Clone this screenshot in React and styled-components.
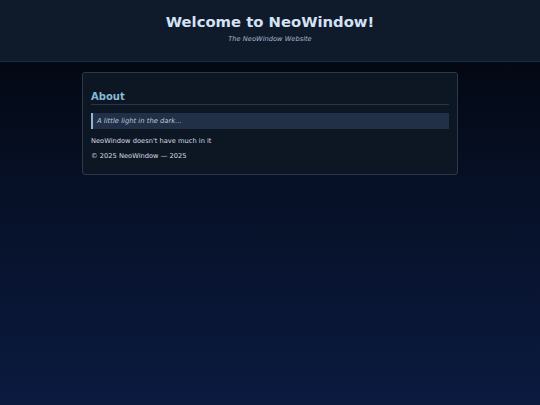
import React from "react";
import styled, { createGlobalStyle } from "styled-components";

const GlobalStyle = createGlobalStyle`
  html, body {
    margin: 0;
    padding: 0;
    min-height: 100%;
  }
  body {
    font-family: "DejaVu Sans", Verdana, sans-serif;
    background: linear-gradient(180deg, #020409 0%, #061026 45%, #0b1a3f 100%);
    min-height: 405px;
    color: #d6dde6;
  }
`;

const Page = styled.div`
  min-height: 405px;
  display: flex;
  flex-direction: column;
`;

const Header = styled.header`
  height: 62px;
  background: #0f1b2b;
  border-bottom: 1px solid #1b2a3d;
  display: flex;
  flex-direction: column;
  align-items: center;
  padding-top: 12px;
  box-sizing: border-box;
`;

const Title = styled.h1`
  margin: 0;
  font-size: 14.8px;
  font-weight: bold;
  color: #d3e2f5;
  line-height: 20px;
`;

const Subtitle = styled.p`
  margin: 3px 0 0;
  font-size: 6.7px;
  font-style: italic;
  color: #a9b8cc;
`;

const Card = styled.section`
  width: 376px;
  box-sizing: border-box;
  margin: 10px auto 0;
  background: #0d1623;
  border: 1px solid #2a394c;
  border-radius: 3px;
  padding: 18px 8px 14px;
`;

const Heading = styled.h2`
  margin: 0;
  font-size: 10px;
  font-weight: bold;
  color: #86bcd6;
  padding-bottom: 2px;
  border-bottom: 1px solid #25364a;
`;

const Quote = styled.blockquote`
  margin: 8px 0 0;
  padding: 4px 4px;
  background: #213047;
  border-left: 2px solid #8fb6d2;
  font-size: 6.8px;
  font-style: italic;
  color: #b9c7d8;
`;

const Text = styled.p`
  margin: ${(p) => p.$top}px 0 0;
  font-size: 6.7px;
  color: #d6dde6;
`;

export default function App() {
  return (
    <Page>
      <GlobalStyle />
      <Header>
        <Title>Welcome to NeoWindow!</Title>
        <Subtitle>The NeoWindow Website</Subtitle>
      </Header>
      <Card>
        <Heading>About</Heading>
        <Quote>A little light in the dark...</Quote>
        <Text $top={8}>NeoWindow doesn't have much in it</Text>
        <Text $top={7}>© 2025 NeoWindow — 2025</Text>
      </Card>
    </Page>
  );
}
